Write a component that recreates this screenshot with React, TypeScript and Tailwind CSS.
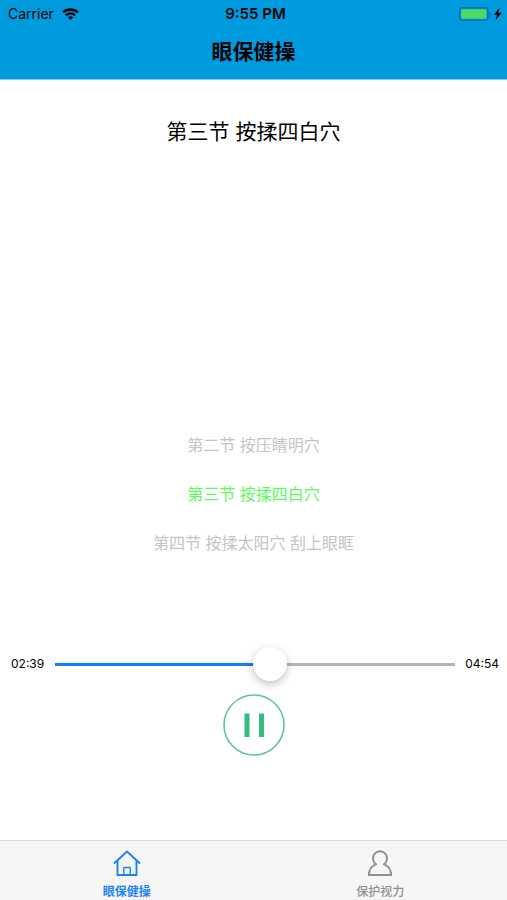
import { useState } from "react";

const sections = ["第二节 按压睛明穴", "第三节 按揉四白穴", "第四节 按揉太阳穴 刮上眼眶"];
const duration = 294;

function formatTime(seconds: number) {
  const m = String(Math.floor(seconds / 60)).padStart(2, "0");
  const s = String(seconds % 60).padStart(2, "0");
  return `${m}:${s}`;
}

function StatusBar() {
  return (
    <div className="grid h-7 grid-cols-3 items-center pl-2 pr-1 text-[15px]">
      <div className="flex items-center gap-1.5 text-sm">
        <span>Carrier</span>
        <svg viewBox="0 0 18 13" className="ml-0.5 h-3 w-[17px]" fill="none" stroke="currentColor" strokeWidth="2.5">
          <path d="M1 4.8a11.6 11.6 0 0 1 16 0" />
          <path d="M4 7.9a7.3 7.3 0 0 1 10 0" />
          <path d="M9 13 6.2 10.2a4 4 0 0 1 5.6 0z" fill="currentColor" stroke="none" />
        </svg>
      </div>
      <span className="text-center font-semibold">9:55 PM</span>
      <svg viewBox="0 0 44 14" className="h-3.5 w-11 justify-self-end">
        <rect x="0.8" y="0.8" width="28" height="12.4" rx="2.5" fill="none" stroke="#0873a8" strokeWidth="1.5" />
        <rect x="2.2" y="2.2" width="25.2" height="9.6" rx="1" fill="#4cd964" />
        <path d="M30 5v4q1.5-.5 1.5-2t-1.5-2z" fill="#0873a8" />
        <path d="M40.6.8 34.8 7.8h3.3L36.4 13.2l6.2-7.4h-3.3z" fill="#000" />
      </svg>
    </div>
  );
}

export default function App() {
  const [time, setTime] = useState(159);
  const [playing, setPlaying] = useState(true);
  const percent = (time / duration) * 100;

  return (
    <div className="flex min-h-screen flex-col bg-white font-[Inter,'Noto_Sans_CJK_SC',sans-serif] text-black">
      <header className="border-b border-[#7fcbee] bg-[#009bdf]">
        <StatusBar />
        <h1 className="pb-[11px] pt-2 text-center text-[21px] leading-8 font-bold">眼保健操</h1>
      </header>

      <main className="flex flex-1 flex-col">
        <h2 className="pt-9 text-center text-[21px] leading-8">第三节 按揉四白穴</h2>

        <ul className="mt-auto text-center text-base text-[#c4c4c4]">
          {sections.map((name, i) => (
            <li key={name} className={i === 1 ? "py-3 leading-[25px] text-[#5cfa5c]" : "py-3 leading-[25px]"}>
              {name}
            </li>
          ))}
        </ul>

        <div className="flex items-center gap-2 pl-[11px] pr-2 pt-[79px] text-xs">
          <span className="w-9">{formatTime(time)}</span>
          <input
            type="range"
            aria-label="播放进度"
            min={0}
            max={duration}
            value={time}
            onChange={(e) => setTime(Number(e.target.value))}
            style={{ backgroundImage: `linear-gradient(to right, #147efb ${percent}%, #b5b5b5 ${percent}%)` }}
            className="h-[34px] min-w-0 flex-1 appearance-none bg-[length:100%_3px] bg-center bg-no-repeat [&::-webkit-slider-thumb]:size-[34px] [&::-webkit-slider-thumb]:appearance-none [&::-webkit-slider-thumb]:rounded-full [&::-webkit-slider-thumb]:bg-white [&::-webkit-slider-thumb]:shadow-[0_3px_8px_rgba(0,0,0,0.25)]"
          />
          <span className="w-9 text-right">{formatTime(duration)}</span>
        </div>

        <button
          type="button"
          aria-label={playing ? "暂停" : "播放"}
          onClick={() => setPlaying(!playing)}
          className="mx-auto mt-[13px] mb-21 size-[62px] text-[#32bc7e]"
        >
          <svg viewBox="0 0 62 62" fill="currentColor">
            <circle cx="31" cy="31" r="30" fill="none" stroke="#5cc598" strokeWidth="1.6" />
            {playing ? (
              <>
                <rect x="21.5" y="19.5" width="5" height="23.5" />
                <rect x="36" y="19.5" width="5" height="23.5" />
              </>
            ) : (
              <path d="M24 19v24l19-12z" />
            )}
          </svg>
        </button>
      </main>

      <nav className="grid h-15 grid-cols-2 border-t border-[#d9d9d9] bg-[#f6f6f6] text-xs">
        <a href="#exercise" aria-current="page" className="flex flex-col items-center gap-[7px] pt-2 font-bold text-[#1b83f3]">
          <svg viewBox="0 0 28 28" className="size-7" fill="none" stroke="currentColor" strokeWidth="1.9" strokeLinecap="round" strokeLinejoin="round">
            <path d="M1.5 14 14 2.5 26.5 14" />
            <path d="M4.500 12v14h19V12" />
            <path d="M10.800 26v-7.500h6.400V26" strokeWidth="1.4" />
          </svg>
          <span>眼保健操</span>
        </a>
        <a href="#protect" className="flex flex-col items-center gap-[7px] pt-2 font-medium text-[#8e8e8e]">
          <svg viewBox="0 0 28 28" className="size-7" fill="none" stroke="currentColor" strokeWidth="1.9" strokeLinejoin="round">
            <path d="M10.200 15.200a7 7 0 1 1 7.600 0c4.300 1.500 6.900 5 7.400 10.800H2.800c.5-5.800 3.100-9.300 7.400-10.800z" />
          </svg>
          <span>保护视力</span>
        </a>
      </nav>
    </div>
  );
}
